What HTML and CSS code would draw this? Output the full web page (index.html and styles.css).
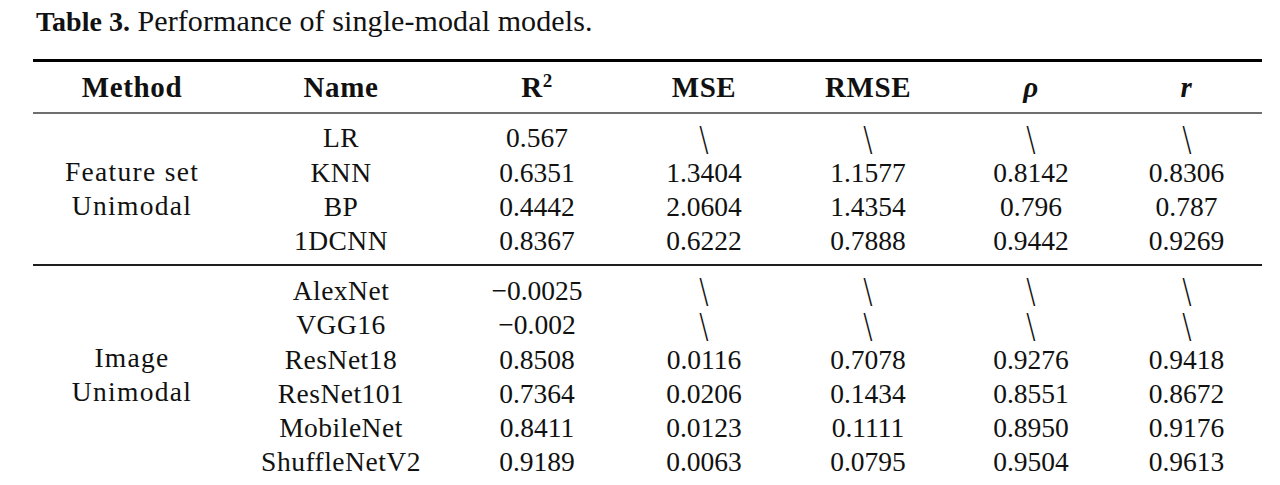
FILE: index.html
```html
<!DOCTYPE html>
<html lang="en">
<head>
<meta charset="utf-8">
<title>Table 3</title>
<link rel="stylesheet" href="styles.css">
</head>
<body>
<div class="page">
  <p class="caption"><b>Table 3.</b> Performance of single-modal models.</p>
  <table class="tbl">
    <colgroup>
      <col class="c1"><col class="c2"><col class="c3"><col class="c4"><col class="c5"><col class="c6"><col class="c7">
    </colgroup>
    <thead>
      <tr>
        <th>Method</th>
        <th>Name</th>
        <th>R<sup>2</sup></th>
        <th>MSE</th>
        <th>RMSE</th>
        <th><i>ρ</i></th>
        <th><i>r</i></th>
      </tr>
    </thead>
    <tbody class="grp g1">
      <tr class="first">
        <td class="method" rowspan="4">Feature set<br>Unimodal</td>
        <td class="name">LR</td><td>0.567</td>
        <td><span class="bs">\</span></td><td><span class="bs">\</span></td><td><span class="bs">\</span></td><td><span class="bs">\</span></td>
      </tr>
      <tr><td class="name">KNN</td><td>0.6351</td><td>1.3404</td><td>1.1577</td><td>0.8142</td><td>0.8306</td></tr>
      <tr><td class="name">BP</td><td>0.4442</td><td>2.0604</td><td>1.4354</td><td>0.796</td><td>0.787</td></tr>
      <tr class="last"><td class="name">1DCNN</td><td>0.8367</td><td>0.6222</td><td>0.7888</td><td>0.9442</td><td>0.9269</td></tr>
    </tbody>
    <tbody class="grp g2">
      <tr class="first">
        <td class="method" rowspan="6">Image<br>Unimodal</td>
        <td class="name">AlexNet</td><td>−0.0025</td>
        <td><span class="bs">\</span></td><td><span class="bs">\</span></td><td><span class="bs">\</span></td><td><span class="bs">\</span></td>
      </tr>
      <tr>
        <td class="name">VGG16</td><td>−0.002</td>
        <td><span class="bs">\</span></td><td><span class="bs">\</span></td><td><span class="bs">\</span></td><td><span class="bs">\</span></td>
      </tr>
      <tr><td class="name">ResNet18</td><td>0.8508</td><td>0.0116</td><td>0.7078</td><td>0.9276</td><td>0.9418</td></tr>
      <tr><td class="name">ResNet101</td><td>0.7364</td><td>0.0206</td><td>0.1434</td><td>0.8551</td><td>0.8672</td></tr>
      <tr><td class="name">MobileNet</td><td>0.8411</td><td>0.0123</td><td>0.1111</td><td>0.8950</td><td>0.9176</td></tr>
      <tr><td class="name">ShuffleNetV2</td><td>0.9189</td><td>0.0063</td><td>0.0795</td><td>0.9504</td><td>0.9613</td></tr>
    </tbody>
  </table>
</div>
</body>
</html>
```

FILE: styles.css
```css
html, body {
  margin: 0;
  padding: 0;
  background: #ffffff;
}

.page {
  padding: 3px 0 0 33px;
  font-family: "Liberation Serif", "Times New Roman", serif;
  color: #111111;
}

.caption {
  margin: 0 0 0 3px;
  font-size: 30px;
  line-height: 36px;
  letter-spacing: 0.1px;
}

.caption b {
  font-weight: bold;
  font-size: 28px;
  letter-spacing: 0;
}

.tbl {
  margin-top: 19px;
  border-collapse: collapse;
  table-layout: fixed;
  width: 1229px;
  font-size: 27.5px;
}

.c1 { width: 198px; }
.c2 { width: 220px; }
.c3 { width: 172px; }
.c4 { width: 162px; }
.c5 { width: 166px; }
.c6 { width: 160px; }
.c7 { width: 151px; }

.tbl thead tr {
  border-top: 3px solid #000;
  border-bottom: 2px solid #6f6f6f;
}

.tbl th {
  height: 50px;
  padding: 0;
  font-size: 29px;
  font-weight: bold;
  letter-spacing: 0.6px;
  text-align: center;
  vertical-align: middle;
  line-height: 30px;
}

.tbl th sup {
  font-size: 19px;
  line-height: 0;
  vertical-align: 0.55em;
  font-weight: bold;
}

.tbl th i {
  font-style: italic;
  font-weight: bold;
}

.tbl td {
  padding: 0;
  height: 34.2px;
  line-height: 34.2px;
  text-align: center;
  vertical-align: middle;
  white-space: nowrap;
}

.tbl td.name {
  letter-spacing: 0.5px;
}

.tbl td.method {
  line-height: 34px;
  letter-spacing: 1.3px;
  vertical-align: middle;
}

.g1 { border-bottom: 2px solid #1e1e1e; }

.g1 tr.first td { padding-top: 7px; }
.g1 tr.last td { padding-bottom: 6px; }
.g1 tr.first td.method { padding-top: 0; padding-bottom: 0; }

.g2 tr.first td { padding-top: 7px; }
.g2 tr.first td.method { padding-top: 4px; }

.bs {
  display: inline-block;
  font-size: 42px;
  line-height: 30px;
  height: 30px;
  font-weight: normal;
  transform: scaleX(0.75);
  vertical-align: middle;
  position: relative;
  top: -1px;
}
```
